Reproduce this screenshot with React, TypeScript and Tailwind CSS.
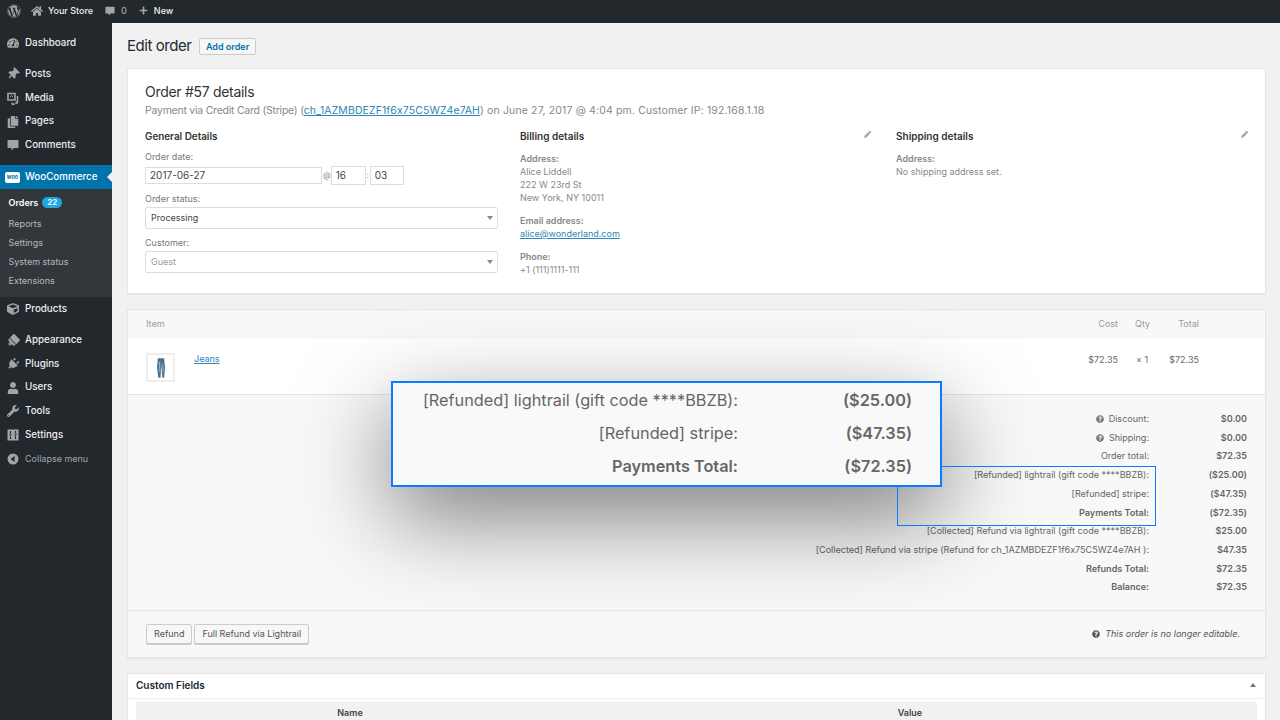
import type { ReactNode } from 'react';
import {
  FaBrush,
  FaCopy,
  FaCube,
  FaHome,
  FaPencilAlt,
  FaPlug,
  FaPlus,
  FaQuestionCircle,
  FaTachometerAlt,
  FaThumbtack,
  FaUser,
  FaWordpress,
  FaWrench,
} from 'react-icons/fa';

const TOTALS: { label: string; value: string; strong?: boolean; help?: boolean }[] = [
  { label: 'Discount:', value: '$0.00', help: true },
  { label: 'Shipping:', value: '$0.00', help: true },
  { label: 'Order total:', value: '$72.35' },
  { label: '[Refunded] lightrail (gift code ****BBZB):', value: '($25.00)' },
  { label: '[Refunded] stripe:', value: '($47.35)' },
  { label: 'Payments Total:', value: '($72.35)', strong: true },
  { label: '[Collected] Refund via lightrail (gift code ****BBZB):', value: '$25.00' },
  { label: '[Collected] Refund via stripe (Refund for ch_1AZMBDEZF1f6x75C5WZ4e7AH ):', value: '$47.35' },
  { label: 'Refunds Total:', value: '$72.35', strong: true },
  { label: 'Balance:', value: '$72.35', strong: true },
];

function BubbleIcon({ size = 12 }: { size?: number }) {
  return (
    <svg width={size} height={size} viewBox="0 0 12 12" fill="currentColor">
      <path d="M1.5 1h9a1 1 0 0 1 1 1v6a1 1 0 0 1-1 1H7l-2.5 2.5V9h-3a1 1 0 0 1-1-1V2a1 1 0 0 1 1-1z" />
    </svg>
  );
}

function MediaIcon() {
  return (
    <svg width="13" height="13" viewBox="0 0 13 13" fill="none" stroke="currentColor">
      <path d="M1 1.5h7v6.500H1z" strokeWidth="1.6" />
      <path d="M3 5l1.500-1.500L6 5" strokeWidth="1" />
      <path d="M10.500 4v6.500" strokeWidth="1.500" />
      <path d="M5 10.500v.7a1.200 1.200 0 0 0 2.400 0" strokeWidth="1.500" />
      <circle cx="9.600" cy="10.800" r="1.300" fill="currentColor" stroke="none" />
    </svg>
  );
}

function SettingsIcon() {
  return (
    <svg width="12" height="12" viewBox="0 0 12 12">
      <rect x="0.500" y="0.500" width="11" height="11" fill="currentColor" />
      <path d="M3.500 2v3M3.500 7.500V10M8.500 2v2M8.500 6.500V10M2.200 6h2.600M7.200 5.200h2.600" stroke="#23282d" strokeWidth="1.100" />
    </svg>
  );
}

function MenuItem({ icon, label, className = '' }: { icon: ReactNode; label: string; className?: string }) {
  return (
    <div className={`flex h-[23.6px] items-center text-[9.8px] font-medium text-[#eeeeee] ${className}`}>
      <span className="flex w-[25px] shrink-0 justify-center pl-[1px] text-[12px] text-[#a0a5aa]">{icon}</span>
      <span>{label}</span>
    </div>
  );
}

function Sidebar() {
  return (
    <aside className="w-[112px] shrink-0 bg-[#23282d] pt-[8.5px]">
      <MenuItem icon={<FaTachometerAlt />} label="Dashboard" className="mb-[7px]" />
      <MenuItem icon={<FaThumbtack className="rotate-45" />} label="Posts" className="mb-[0.7px]" />
      <MenuItem icon={<MediaIcon />} label="Media" />
      <MenuItem icon={<FaCopy />} label="Pages" />
      <MenuItem icon={<BubbleIcon />} label="Comments" className="mb-[8px]" />
      <div className="relative flex h-[24px] items-center bg-[#0073aa] text-[9.8px] font-medium text-white">
        <span className="flex w-[25px] shrink-0 justify-center">
          <span className="rounded-[2px] bg-white px-[1.5px] text-[5.5px] font-bold leading-[11px] text-[#0073aa]">woo</span>
        </span>
        WooCommerce
        <span className="absolute right-0 top-[7px] h-0 w-0 border-y-[5px] border-r-[5px] border-y-transparent border-r-[#f1f1f1]" />
      </div>
      <div className="h-[108px] bg-[#32373c] pl-[8.5px] pt-[3.5px] text-[9px] leading-[19px] text-[#b4b9be]">
        <div className="mb-[2.5px] flex items-center font-semibold text-white">
          Orders
          <span className="ml-[4px] rounded-full bg-[#1fa8e0] px-[5px] text-[8px] font-semibold leading-[11px] text-white">22</span>
        </div>
        <div>Reports</div>
        <div>Settings</div>
        <div>System status</div>
        <div>Extensions</div>
      </div>
      <MenuItem icon={<FaCube />} label="Products" className="mb-[8px]" />
      <MenuItem icon={<FaBrush className="rotate-45" />} label="Appearance" />
      <MenuItem icon={<FaPlug className="rotate-45" />} label="Plugins" />
      <MenuItem icon={<FaUser />} label="Users" />
      <MenuItem icon={<FaWrench />} label="Tools" />
      <MenuItem icon={<SettingsIcon />} label="Settings" />
      <div className="flex h-[23.6px] items-center text-[9px] text-[#a0a5aa]">
        <span className="flex w-[25px] shrink-0 justify-center pl-[1px]">
          <svg width="12" height="12" viewBox="0 0 12 12">
            <circle cx="6" cy="6" r="5.5" fill="#a0a5aa" />
            <path d="M7.600 3v6L3.600 6z" fill="#23282d" />
          </svg>
        </span>
        Collapse menu
      </div>
    </aside>
  );
}

function AddressBlock({ title, children }: { title: string; children: ReactNode }) {
  return (
    <div className="text-[9px] leading-[13.2px] text-[#888888]">
      <div className="font-semibold">{title}</div>
      {children}
    </div>
  );
}

function SelectBox({ value, muted }: { value: string; muted?: boolean }) {
  return (
    <div className={`flex h-[22px] w-[353px] items-center justify-between rounded-[2px] border border-[#dddddd] bg-white pl-[5px] pr-[4px] pt-[1px] text-[9px] ${muted ? 'text-[#999999]' : 'text-[#444444]'}`}>
      {value}
      <span className="h-0 w-0 border-x-[3.5px] border-t-[4px] border-x-transparent border-t-[#888888]" />
    </div>
  );
}

function JeansThumb() {
  return (
    <div className="flex h-[29px] w-[29px] items-center justify-center border-2 border-[#eeeeee] bg-white">
      <svg width="8" height="22" viewBox="0 0 9 22">
        <path d="M1 0h7l1 10-1 12H6L4.800 8 4 22H1.500L0 10z" fill="#4e6f8c" />
        <path d="M2 4h1.500l.4 10-1.300 2zM6 6h1l.4 8-1 2z" fill="#9db4c7" />
      </svg>
    </div>
  );
}

function OrderDetails() {
  return (
    <section className="mb-[15px] h-[226px] border border-[#e5e5e5] bg-white pl-[17px] pr-[17px] pt-[14px] shadow-[0_1px_1px_rgba(0,0,0,0.04)]">
      <h2 className="text-[14px] leading-[18px] tracking-[-0.3px] text-[#333333]">Order #57 details</h2>
      <p className="mt-[1.5px] text-[10.5px] leading-[16px] text-[#888888]">
        <span className="tracking-[-0.24px]">Payment via Credit Card (Stripe) (</span>
        <span className="tracking-[0.1px] text-[#2b87b5] underline">ch_1AZMBDEZF1f6x75C5WZ4e7AH</span>
        <span className="tracking-[0.15px]">) on June 27, 2017 @ 4:04 pm. Customer IP: 192.168.1.18</span>
      </p>
      <div className="mt-[11px] flex">
        <div className="w-[375px] shrink-0">
          <h3 className="text-[9.9px] font-semibold leading-[12px] text-[#333333]">General Details</h3>
          <div className="mt-[8px] text-[9px] leading-[13px] text-[#777777]">Order date:</div>
          <div className="mt-[3px] flex items-center text-[10px] text-[#444444]">
            <div className="flex h-[17px] w-[177px] items-center border border-[#dddddd] px-[4px]">2017-06-27</div>
            <span className="ml-[1px] text-[8px] text-[#888888]">@</span>
            <div className="flex h-[19px] w-[35px] items-center border border-[#dddddd] px-[4px]">16</div>
            <span className="w-[4px] text-center text-[8px] text-[#888888]">:</span>
            <div className="flex h-[19px] w-[34px] items-center border border-[#dddddd] px-[4px]">03</div>
          </div>
          <div className="mb-[2px] mt-[7px] text-[9px] leading-[13px] text-[#777777]">Order status:</div>
          <SelectBox value="Processing" />
          <div className="mb-[2px] mt-[7px] text-[9px] leading-[13px] text-[#777777]">Customer:</div>
          <SelectBox value="Guest" muted />
        </div>
        <div className="w-[376px] shrink-0">
          <h3 className="relative w-[351px] text-[10px] font-semibold leading-[12px] text-[#333333]">
            Billing details
            <FaPencilAlt className="absolute right-0 top-[1px] text-[7px] text-[#999999]" />
          </h3>
          <div className="mt-[10px] flex flex-col gap-[9.5px]">
            <AddressBlock title="Address:">
              <div>Alice Liddell</div>
              <div>222 W 23rd St</div>
              <div>New York, NY 10011</div>
            </AddressBlock>
            <AddressBlock title="Email address:">
              <div className="text-[#2b87b5] underline">alice@wonderland.com</div>
            </AddressBlock>
            <AddressBlock title="Phone:">
              <div>+1 (111)1111-111</div>
            </AddressBlock>
          </div>
        </div>
        <div className="flex-1">
          <h3 className="relative text-[10px] font-semibold leading-[12px] text-[#333333]">
            Shipping details
            <FaPencilAlt className="absolute right-0 top-[1px] text-[7px] text-[#999999]" />
          </h3>
          <div className="mt-[10px]">
            <AddressBlock title="Address:">
              <div>No shipping address set.</div>
            </AddressBlock>
          </div>
        </div>
      </div>
    </section>
  );
}

function OrderItems() {
  return (
    <section className="relative mb-[15px] border border-[#e5e5e5] bg-[#f8f8f8] shadow-[0_1px_1px_rgba(0,0,0,0.04)]">
      <div className="flex h-[29px] items-center pb-[2px] pl-[18px] pr-[66px] text-[9px] text-[#999999]">
        <span className="flex-1">Item</span>
        <span className="w-[40px] text-right">Cost</span>
        <span className="ml-[17px] w-[15px]">Qty</span>
        <span className="w-[49px] text-right">Total</span>
      </div>
      <div className="flex h-[56px] items-start border-b border-[#e5e5e5] bg-white pl-[18px] pr-[66px] pt-[14px] text-[9px] text-[#666666]">
        <JeansThumb />
        <span className="ml-[19px] mt-[-1px] flex-1 text-[#2b87b5] underline">Jeans</span>
        <span className="w-[40px] text-right">$72.35</span>
        <span className="ml-[18px] w-[14px]">× 1</span>
        <span className="w-[49px] text-right">$72.35</span>
      </div>
      <div className="flex h-[216px] flex-col items-end border-b border-[#e5e5e5] pr-[18px] pt-[14.5px]">
        {TOTALS.map((row) => (
          <div key={row.label} className="flex h-[18.7px] items-center text-[9.05px] text-[#666666]">
            {row.help && <FaQuestionCircle className="mr-[5px] text-[8px] text-[#777777]" />}
            <span className={row.strong ? 'font-semibold' : ''}>{row.label}</span>
            <span className="w-[98px] text-right font-semibold">{row.value}</span>
          </div>
        ))}
      </div>
      <div className="flex h-[46px] items-center pl-[18px] pr-[25px]">
        <button type="button" className="h-[20px] rounded-[2px] border border-[#cccccc] bg-[#f7f7f7] px-[7px] text-[9px] text-[#555555] shadow-[0_1px_0_#cccccc]">Refund</button>
        <button type="button" className="ml-[2px] h-[20px] rounded-[2px] border border-[#cccccc] bg-[#f7f7f7] px-[7px] text-[9px] text-[#555555] shadow-[0_1px_0_#cccccc]">Full Refund via Lightrail</button>
        <span className="ml-auto flex items-center text-[9px] italic text-[#555555]">
          <FaQuestionCircle className="mr-[5px] text-[8px] not-italic text-[#555555]" />
          This order is no longer editable.
        </span>
      </div>
      {/* shadow sits under the outline, the callout box sits over it */}
      <div className="absolute left-[263px] top-[71px] h-[106px] w-[551px] shadow-[0_30px_90px_rgba(0,0,0,0.5)]" />
      <div className="absolute left-[769px] top-[156px] h-[60px] w-[259px] border border-[#0a7cff]" />
      <div className="absolute left-[263px] top-[71px] flex h-[106px] w-[551px] flex-col justify-center border-2 border-[#0a7cff] bg-[#f9f9f9] pb-[2px] pr-[28px] text-[16.3px] leading-[33px] text-[#666666]">
        <div className="flex justify-end"><span>[Refunded] lightrail (gift code ****BBZB):</span><span className="w-[174px] text-right font-semibold">($25.00)</span></div>
        <div className="flex justify-end"><span>[Refunded] stripe:</span><span className="w-[174px] text-right font-semibold">($47.35)</span></div>
        <div className="flex justify-end"><span className="font-semibold">Payments Total:</span><span className="w-[174px] text-right font-semibold">($72.35)</span></div>
      </div>
    </section>
  );
}

function CustomFields() {
  return (
    <section className="border border-[#e5e5e5] bg-white">
      <div className="flex h-[25px] items-center justify-between border-b border-[#eeeeee] pb-[2px] pl-[8px] pr-[9px] text-[10px] font-semibold text-[#23282d]">
        Custom Fields
        <span className="h-0 w-0 border-x-[3.5px] border-b-[4px] border-x-transparent border-b-[#777777]" />
      </div>
      <div className="ml-[8px] mr-[8px] mt-[3px] flex h-[30px] bg-[#f1f1f1] pl-[1px] pt-[3.5px] text-[9px] font-semibold text-[#444444]">
        <span className="w-[426px] text-center">Name</span>
        <span className="flex-1 text-center">Value</span>
      </div>
    </section>
  );
}

export default function App() {
  return (
    <div className="flex h-[720px] flex-col overflow-hidden bg-[#f1f1f1] font-['Inter','Liberation_Sans',sans-serif] [font-feature-settings:'calt'_0]">
      <header className="flex h-[23px] shrink-0 items-center bg-[#23282d] pb-[2px] pl-[7px] text-[9px] font-medium text-[#eeeeee]">
        <FaWordpress className="text-[14px] text-[#a0a5aa]" />
        <FaHome className="ml-[10px] text-[12px] text-[#a0a5aa]" />
        <span className="ml-[5px]">Your Store</span>
        <span className="ml-[12px] text-[#a0a5aa]"><BubbleIcon size={10} /></span>
        <span className="ml-[6px] text-[#a0a5aa]">0</span>
        <FaPlus className="ml-[12px] text-[9px] text-[#a0a5aa]" />
        <span className="ml-[6px]">New</span>
      </header>
      <div className="flex min-h-0 flex-1">
        <Sidebar />
        <main className="min-w-0 flex-1 pl-[15px] pr-[14px]">
          <div className="flex h-[45px] items-center pt-[2px]">
            <h1 className="text-[15px] tracking-[-0.45px] text-[#23282d]">Edit order</h1>
            <button type="button" className="ml-[8px] h-[17px] rounded-[2px] border border-[#cccccc] bg-[#f7f7f7] px-[5.5px] text-[9px] font-semibold leading-none text-[#0073aa]">Add order</button>
          </div>
          <OrderDetails />
          <OrderItems />
          <CustomFields />
        </main>
      </div>
    </div>
  );
}
